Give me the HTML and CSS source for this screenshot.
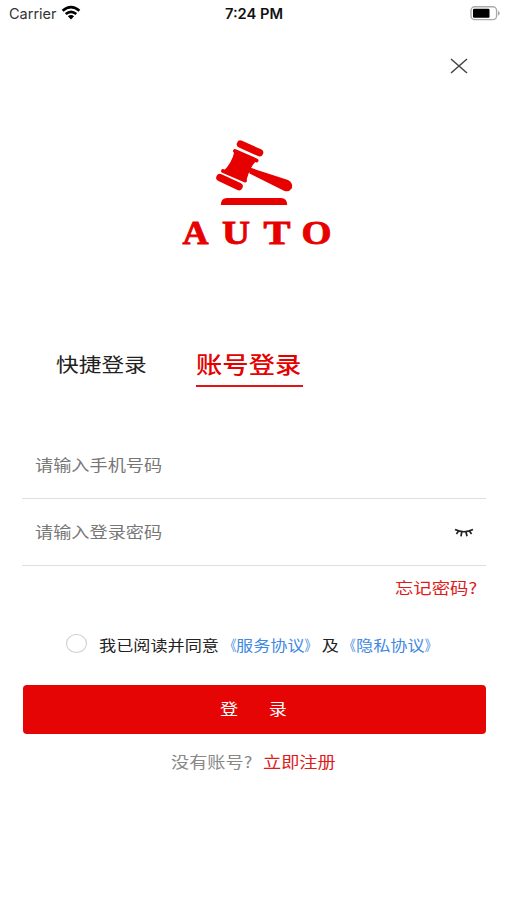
FILE: index.html
```
<!DOCTYPE html>
<html lang="zh-CN">
<head>
<meta charset="utf-8">
<title>账号登录</title>
<link rel="stylesheet" href="styles.css">
</head>
<body>
<header class="status">
  <div class="carrier"><span>Carrier</span>
    <svg width="20" height="16" viewBox="0 0 20 16"><g fill="none" stroke="#000" stroke-width="2.6"><path d="M1.6 5.8Q10-1.6 18.4 5.8"/><path d="M4.7 9Q10 4.6 15.3 9"/></g><path d="M6.9 11.3Q10 8.8 13.1 11.3L10 14.4Z"/></svg>
  </div>
  <div class="time">7:24 PM</div>
  <svg class="battery" width="32" height="15" viewBox="0 0 32 15"><rect x="2" y=".8" width="25.6" height="12.8" rx="3.7" fill="none" stroke="#aaa" stroke-width="1.4"/><rect x="4" y="2.8" width="16.5" height="9" rx="1.2"/><path d="M29 4.7Q32.500 7.200 29 9.700Z" fill="#aaa"/></svg>
</header>
<button class="close" aria-label="关闭"><svg width="18" height="16" viewBox="0 0 18 16"><path d="M1 1L17 15M17 1L1 15" stroke="#444" stroke-width="1.5" fill="none"/></svg></button>
<div class="logo">
  <svg width="170" height="125" viewBox="0 0 170 125" fill="#e60000">
    <path d="M64.500 21L86.500 30.500Q80 37 76.500 50L53.500 41Q62 33 64.500 21Z"/>
    <g stroke="#e60000" stroke-linecap="round">
      <path d="M70.500 14.200L89.500 22.700" stroke-width="7.500"/>
      <path d="M50 47.700L69 56.500" stroke-width="7.500"/>
      <path d="M65 21L86.500 30.500" stroke-width="4"/>
      <path d="M53 41L75 50.500" stroke-width="4"/>
    </g>
    <path d="M80.700 37.800L118 50Q123.600 53.500 121.600 58.500Q119 62.500 114 60.700L79.500 43.500Q78.300 40 80.700 37.800Z"/>
    <path d="M50.800 75Q51 68 57 68H111Q117 68 117.200 75Z"/>
    <g class="brand"><text x="12.500" y="114.300" textLength="26" lengthAdjust="spacingAndGlyphs">A</text><text x="52" y="114.300" textLength="28" lengthAdjust="spacingAndGlyphs">U</text><text x="93.500" y="114.300" textLength="27" lengthAdjust="spacingAndGlyphs">T</text><text x="131.500" y="114.300" textLength="30" lengthAdjust="spacingAndGlyphs">O</text></g>
  </svg>
</div>
<nav class="tabs">
  <a class="tab"><span class="wide">快捷登录</span></a>
  <a class="tab active"><span class="wide">账号登录</span></a>
</nav>
<main class="form">
  <div class="field first"><span class="wide">请输入手机号码</span></div>
  <div class="field"><span class="wide">请输入登录密码</span>
    <svg width="20" height="10" viewBox="0 0 20 10" fill="none" stroke="#222" stroke-width="1.700"><path d="M1 1.500Q10 6 19 1.500M4.500 3L2.500 6M7.700 4L7 8.300M12 4L13 8.300M15.500 3L17.500 6"/></svg>
  </div>
  <div class="forgot"><span class="wide">忘记密码?</span></div>
  <div class="agree"><i class="radio"></i><span class="wide">我已阅读并同意<a><b class="open">《</b>服务协议<b class="shut">》</b></a>及<a><b class="open">《</b>隐私协议<b class="shut">》</b></a></span></div>
  <button class="submit"><span class="wide"><span>登</span><span>录</span></span></button>
  <div class="register"><span class="wide ask">没有账号?</span><span class="wide join">立即注册</span></div>
</main>
</body>
</html>
```
FILE: styles.css
```
* { box-sizing: border-box; }
body {
  margin: 0;
  height: 900px;
  overflow: hidden;
  background: #fff;
  color: #222;
  font-family: "Noto Sans CJK SC", sans-serif;
}
button { border: 0; padding: 0; background: none; font-family: inherit; display: block; }
svg { display: block; flex: none; }
.wide {
  display: inline-block;
  white-space: nowrap;
  transform: translateY(-.4px) scale(1.135, .96);
  transform-origin: left center;
}
.status {
  height: 28px;
  padding: 0 6px 0 9px;
  display: grid;
  grid-template-columns: 1fr auto 1fr;
  align-items: center;
  font: 14.5px/28px Inter, sans-serif;
}
.carrier { display: flex; align-items: center; gap: 5px; color: #333; }
.carrier svg { margin: -2px 0 0 -1px; }
.time { font-weight: 600; font-size: 14.7px; color: #111; transform: translateX(-1px); }
.battery { justify-self: end; margin-top: -1px; }
.close { margin: 30px 0 0 450px; height: 16px; }
.logo { margin: 56px 0 0 170px; height: 125px; }
.brand { font: bold 34px "Liberation Serif", serif; stroke: #e60000; stroke-width: .9px; }
.tabs { height: 132px; margin-top: 85px; padding-left: 55.5px; display: flex; }
.tab { width: 140.5px; height: 47px; font-size: 20px; line-height: 50px; }
.tab.active {
  width: 107px;
  border-bottom: 2px solid #e01515;
  color: #e60000;
  font-size: 23.2px;
  font-weight: 500;
  line-height: 49px;
}
.form { padding: 0 21px 0 22px; margin-top: -40px; }
.field {
  height: 67px;
  padding: 0 12px 1px 12.5px;
  border-bottom: 1px solid #dedede;
  display: flex;
  align-items: center;
  justify-content: space-between;
  color: #777;
  font-size: 16px;
  line-height: 24px;
}
.field svg { margin-top: 3px; }
.forgot { height: 46px; padding-left: 373px; color: #e01b1b; font-size: 16.2px; line-height: 44px; }
.agree { height: 73px; padding: 17px 0 0 44px; display: flex; font-size: 15.1px; line-height: 33px; }
.radio { width: 21px; height: 19px; margin: 5px 12px 0 0; border: 1.3px solid #ccc; border-radius: 50%; }
.agree .wide { height: 33px; }
.agree a { color: #4189df; }
.agree b { display: inline-block; font-weight: inherit; transform: scaleX(.7); }
.agree .open { transform-origin: right center; }
.agree .shut { transform-origin: left center; }
.submit { width: 463px; height: 49px; margin-left: 1px; padding: 0 0 2px 197px; border-radius: 4px; background: #e60505; color: #fff; font-size: 16px; text-align: left; }
.submit span span + span { margin-left: 27px; }
.register { padding-left: 149px; display: flex; font-size: 16px; line-height: 56px; }
.ask { width: 92px; color: #888; }
.join { color: #e01b1b; }
```
